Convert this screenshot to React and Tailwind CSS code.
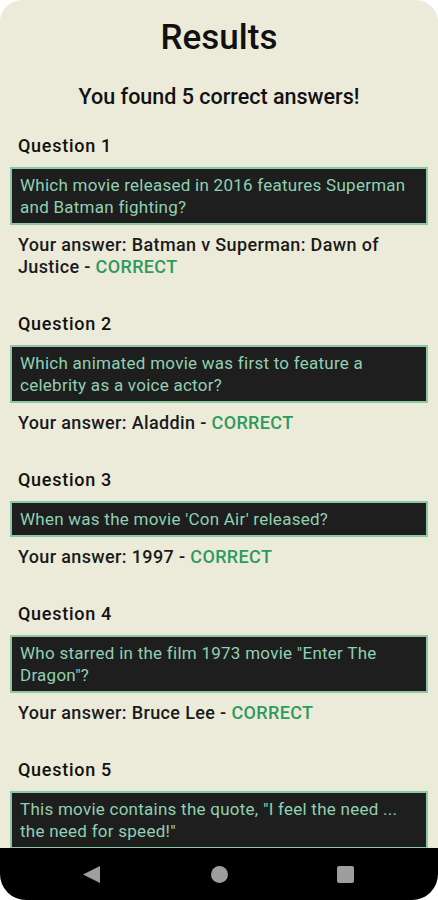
import React from 'react';

const results = [
  {
    q: 'Which movie released in 2016 features Superman and Batman fighting?',
    a: 'Batman v Superman: Dawn of Justice',
  },
  {
    q: 'Which animated movie was first to feature a celebrity as a voice actor?',
    a: 'Aladdin',
  },
  { q: "When was the movie 'Con Air' released?", a: '1997' },
  { q: 'Who starred in the film 1973 movie "Enter The Dragon"?', a: 'Bruce Lee' },
  {
    q: 'This movie contains the quote, "I feel the need ... the need for speed!"',
    a: 'Top Gun',
  },
];

export default function App() {
  return (
    <div className="w-[438px] h-[900px] bg-white overflow-hidden relative font-['Roboto',sans-serif]">
      <div className="h-full bg-[#ecebd9] rounded-t-[22px] rounded-b-[26px] overflow-hidden">
        <h1 className="pt-[18px] h-[58px] leading-[40px] text-center text-[35px] font-medium text-[#111]">Results</h1>
        <p className="mt-[25px] leading-[28px] text-center text-[21.5px] font-medium text-[#111]">You found 5 correct answers!</p>

        <div className="mt-[23px] px-[10px] flex flex-col gap-[34px]">
          {results.map((r, i) => (
            <div key={i}>
              <h2 className="pl-[8px] leading-[24px] text-[18px] font-medium tracking-[0.04em] text-[#111]">Question {i + 1}</h2>
              <div className="mt-[9px] bg-[#1e1e1e] border-2 border-[#8cc7a6] px-[8px] py-[5px]">
                <p className="leading-[22px] text-[17px] tracking-[0.015em] text-[#8fd1b2]">{r.q}</p>
              </div>
              <p className="mt-[9px] pl-[8px] pr-[40px] leading-[22px] text-[18px] font-medium tracking-[0.02em] text-[#1a1a1a]">
                Your answer: {r.a} - <span className="text-[#2e9a5e]">CORRECT</span>
              </p>
            </div>
          ))}
        </div>
      </div>

      <div className="absolute left-0 right-0 bottom-0 h-[52px] bg-black rounded-b-[26px]" />
      <svg width="18" height="17" viewBox="0 0 18 17" className="absolute left-[83px] bottom-[17px]">
        <path d="M0 8.5 L17 0 L17 17 Z" fill="#9e9e9e" />
      </svg>
      <div className="absolute left-[211px] bottom-[17px] w-[17px] h-[17px] rounded-full bg-[#9e9e9e]" />
      <div className="absolute left-[337px] bottom-[17px] w-[17px] h-[17px] rounded-[2px] bg-[#9e9e9e]" />
    </div>
  );
}
